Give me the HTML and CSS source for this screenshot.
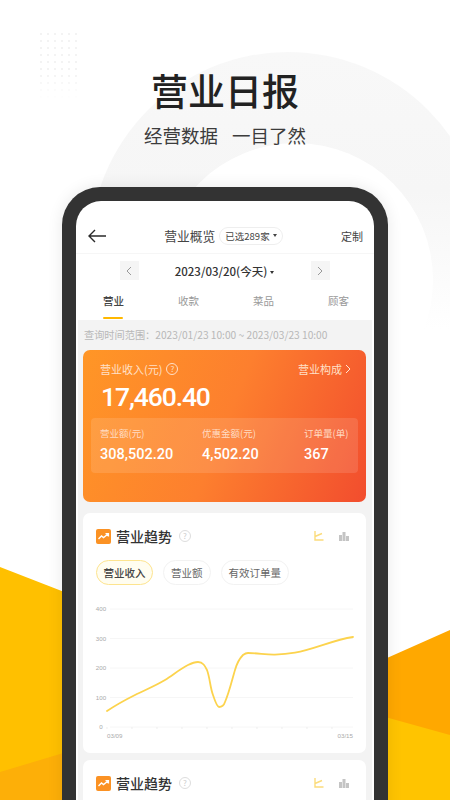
FILE: index.html
```html
<!DOCTYPE html>
<html lang="zh-CN">
<head>
<meta charset="utf-8">
<title>营业日报</title>
<link rel="stylesheet" href="styles.css">
</head>
<body>
<main class="page">
  <svg class="backdrop" width="450" height="800" viewBox="0 0 450 800" aria-hidden="true">
    <defs>
      <pattern id="dots" width="7" height="7" patternUnits="userSpaceOnUse" x="40" y="33">
        <circle cx="1" cy="1" r="0.8" fill="#e4e4e4"/>
      </pattern>
      <linearGradient id="ring" gradientUnits="userSpaceOnUse" x1="0" y1="52" x2="0" y2="330">
        <stop offset="0" stop-color="#f8f8f8"/>
        <stop offset="0.5" stop-color="#f6f6f6"/>
        <stop offset="1" stop-color="#fff"/>
      </linearGradient>
      <linearGradient id="fadeDots" x1="0" y1="0" x2="0" y2="1">
        <stop offset="0" stop-color="#fff"/>
        <stop offset="0.6" stop-color="#fff"/>
        <stop offset="1" stop-color="#000"/>
      </linearGradient>
      <mask id="dotMask"><rect x="40" y="33" width="38" height="66" fill="url(#fadeDots)"/></mask>
    </defs>
    <circle cx="288" cy="250" r="198" fill="url(#ring)"/>
    <circle cx="296" cy="280" r="137" fill="#fff"/>
    <rect x="40" y="33" width="38" height="66" fill="url(#dots)" mask="url(#dotMask)"/>
    <polygon points="0,567 90,602 90,800 0,800" fill="#ffc000"/>
    <polygon points="0,772 90,745 90,800 0,800" fill="#fdaf08"/>
    <polygon points="360,800 360,670 450,630 450,800" fill="#ffa800"/>
    <polygon points="360,710 450,735 450,800 360,800" fill="#ffc400"/>
  </svg>

  <header class="hero">
    <h1 class="hero-title">营业日报</h1>
    <p class="hero-sub"><span>经营数据</span><span>一目了然</span></p>
  </header>

  <section class="phone">
    <div class="screen">
      <nav class="nav">
        <svg class="back" width="18" height="14" viewBox="0 0 18 14" aria-hidden="true">
          <path d="M18 7H1M7 1 1 7l6 6" fill="none" stroke="#2a2a2a" stroke-width="1.400"/>
        </svg>
        <div class="nav-center">
          <span class="nav-title">营业概览</span>
          <span class="store-pill">已选289家<i class="caret-mini"></i></span>
        </div>
        <span class="nav-action">定制</span>
      </nav>

      <div class="date-row">
        <span class="date-btn">
          <svg width="6" height="10" viewBox="0 0 6 10" aria-hidden="true"><path d="M5 1 1 5l4 4" fill="none" stroke="#999" stroke-width="1"/></svg>
        </span>
        <span class="date-text">2023/03/20(今天)<i class="caret-mini dark"></i></span>
        <span class="date-btn">
          <svg width="6" height="10" viewBox="0 0 6 10" aria-hidden="true"><path d="m1 1 4 4-4 4" fill="none" stroke="#999" stroke-width="1"/></svg>
        </span>
      </div>

      <div class="tabs">
        <span class="tab active">营业</span>
        <span class="tab">收款</span>
        <span class="tab">菜品</span>
        <span class="tab">顾客</span>
      </div>

      <div class="content">
        <p class="range">查询时间范围：2023/01/23 10:00 ~ 2023/03/23 10:00</p>

        <section class="revenue">
          <div class="revenue-top">
            <span class="revenue-label">营业收入(元)<i class="help light">?</i></span>
            <span class="revenue-link">营业构成
              <svg width="6" height="10" viewBox="0 0 6 10" aria-hidden="true"><path d="m1 1 4 4-4 4" fill="none" stroke="#ffe6d2" stroke-width="1"/></svg>
            </span>
          </div>
          <div class="revenue-value">17,460.40</div>
          <div class="stats">
            <div class="stat stat-a"><span class="stat-label">营业额(元)</span><strong class="stat-value">308,502.20</strong></div>
            <div class="stat stat-b"><span class="stat-label">优惠金额(元)</span><strong class="stat-value">4,502.20</strong></div>
            <div class="stat stat-c"><span class="stat-label">订单量(单)</span><strong class="stat-value">367</strong></div>
          </div>
        </section>

        <section class="card">
          <div class="card-head">
            <svg class="trend-icon" width="15" height="15" viewBox="0 0 15 15" aria-hidden="true">
              <rect width="15" height="15" rx="2" fill="#fb9224"/>
              <path d="M2.500 10 5.500 7l2 1.600L12 5M9.500 4.600H12.400V7.400" fill="none" stroke="#fff" stroke-width="1.400"/>
            </svg>
            <h2 class="card-title">营业趋势</h2>
            <i class="help">?</i>
            <div class="chart-icons">
              <svg width="10" height="10" viewBox="0 0 10 10" aria-hidden="true"><path d="M1 0v9h8.500M1 5.500 8 2.500" fill="none" stroke="#fbdc7c" stroke-width="1.400"/></svg>
              <svg width="10" height="10" viewBox="0 0 10 10" aria-hidden="true"><path d="M0 4h3v6H0zM3.500 1h3v9h-3zM7 5h3v5H7z" fill="#c4c4c4"/></svg>
            </div>
          </div>
          <div class="chips">
            <span class="chip chip-on">营业收入</span>
            <span class="chip">营业额</span>
            <span class="chip">有效订单量</span>
          </div>
          <svg class="chart" width="283" height="148" viewBox="0 0 283 148" role="img" aria-label="营业趋势折线图">
            <path class="grid" d="M27 14H270M27 43.500H270M27 73H270M27 102.500H270M27 132H270"/>
            <path class="ticks" d="M24 132v2M49 132v2M74 132v2M99 132v2M124 132v2M149 132v2M174 132v2M199 132v2M224 132v2M249 132v2"/>
            <g class="axis">
              <text x="18" y="16" text-anchor="middle">400</text>
              <text x="18" y="45.500" text-anchor="middle">300</text>
              <text x="18" y="75" text-anchor="middle">200</text>
              <text x="18" y="104.500" text-anchor="middle">100</text>
              <text x="18" y="134" text-anchor="middle">0</text>
              <text x="24" y="143">03/09</text>
              <text x="270" y="143" text-anchor="end">03/15</text>
            </g>
            <path class="line" d="M24 116C33 110 42 105 52 100C62 95 72 91 82 85C90 80 97 74 105 70C109 68 112 67 115 67C120 67 122 71 124 75C127 83 127 92 130 100C132 106 134 112 136 112C139 112 141 110 142 107C146 98 149 85 152 75C154 68 157 63 160 60C162 58.500 163 58 165 58C175 58 183 60 192 59.700C200 59.400 206 58.700 212 57.700C232 54 250 45 270 42"/>
          </svg>
        </section>

        <section class="card card-next">
          <div class="card-head">
            <svg class="trend-icon" width="15" height="15" viewBox="0 0 15 15" aria-hidden="true">
              <rect width="15" height="15" rx="2" fill="#fb9224"/>
              <path d="M2.500 10 5.500 7l2 1.600L12 5M9.500 4.600H12.400V7.400" fill="none" stroke="#fff" stroke-width="1.400"/>
            </svg>
            <h2 class="card-title">营业趋势</h2>
            <i class="help">?</i>
            <div class="chart-icons">
              <svg width="10" height="10" viewBox="0 0 10 10" aria-hidden="true"><path d="M1 0v9h8.500M1 5.500 8 2.500" fill="none" stroke="#fbdc7c" stroke-width="1.400"/></svg>
              <svg width="10" height="10" viewBox="0 0 10 10" aria-hidden="true"><path d="M0 4h3v6H0zM3.500 1h3v9h-3zM7 5h3v5H7z" fill="#c4c4c4"/></svg>
            </div>
          </div>
        </section>
      </div>
    </div>
  </section>
</main>
</body>
</html>
```
FILE: styles.css
```css
* { box-sizing: border-box; }
html, body { margin: 0; padding: 0; }
body {
  width: 450px;
  height: 800px;
  overflow: hidden;
  background: #fff;
  font-family: "Noto Sans CJK SC", "Noto Sans", sans-serif;
}
.page {
  position: relative;
  width: 450px;
  height: 800px;
  overflow: hidden;
  padding-top: 65px;
}
.backdrop { position: absolute; left: 0; top: 0; }

.hero { position: relative; }
.hero-title {
  margin: 0;
  height: 50px;
  text-align: center;
  font-size: 37px;
  line-height: 50px;
  font-weight: 500;
  color: #222;
}
.hero-sub {
  display: flex;
  justify-content: center;
  gap: 14px;
  margin: 0;
  height: 37px;
  padding-top: 8px;
  font-size: 18.500px;
  line-height: 24px;
  color: #3c3c3c;
}

.phone {
  position: relative;
  width: 326px;
  height: 640px;
  margin: 35px 0 0 62px;
  padding: 14px 14px 0;
  background: #333;
  border-radius: 38px 38px 0 0;
  box-shadow: 0 0 16px rgba(0, 0, 0, .09);
}
.screen {
  height: 100%;
  border-radius: 25px 25px 0 0;
  background: #fff;
  overflow: hidden;
}

.nav {
  position: relative;
  display: flex;
  align-items: center;
  justify-content: center;
  height: 53px;
  padding-top: 17px;
  border-bottom: 1px solid #f6f6f6;
}
.back { position: absolute; left: 12px; top: 28px; }
.nav-center { display: flex; align-items: center; gap: 4px; margin-left: -3px; }
.nav-title { font-size: 12.750px; line-height: 18px; color: #444; }
.store-pill {
  display: flex;
  align-items: center;
  height: 18px;
  padding: 0 5px;
  border: 1px solid #eee;
  border-radius: 9px;
  font-size: 9.500px;
  color: #444;
}
.nav-action {
  position: absolute;
  right: 11px;
  top: 26px;
  font-size: 11px;
  line-height: 18px;
  color: #444;
}
.caret-mini {
  display: inline-block;
  width: 0;
  height: 0;
  margin-left: 3px;
  border-left: 2px solid transparent;
  border-right: 2px solid transparent;
  border-top: 3px solid #444;
}
.caret-mini.dark { border-top-color: #333; vertical-align: 2px; }

.date-row {
  display: flex;
  align-items: center;
  justify-content: center;
  height: 30px;
  padding: 3px 1px 0 0;
}
.date-btn {
  display: flex;
  align-items: center;
  justify-content: center;
  width: 19px;
  height: 19px;
  background: #f5f5f5;
}
.date-text {
  width: 172px;
  text-align: center;
  font-size: 11.500px;
  line-height: 18px;
  font-weight: 500;
  color: #333;
}

.tabs {
  display: grid;
  grid-template-columns: repeat(4, 75px);
  height: 36px;
}
.tab {
  position: relative;
  padding-top: 8px;
  text-align: center;
  font-size: 10.500px;
  line-height: 18px;
  color: #999;
}
.tab.active { color: #444; font-weight: 500; }
.tab.active::after {
  content: "";
  position: absolute;
  left: 27px;
  bottom: 1px;
  width: 20px;
  height: 2.500px;
  border-radius: 2px;
  background: #ffb800;
}

.content {
  height: 600px;
  margin: 0 2px;
  padding: 0 6px 0 5px;
  background: #f3f3f3;
}
.range {
  margin: 0;
  height: 30px;
  padding: 6px 0 0 1px;
  font-size: 10.200px;
  line-height: 18px;
  color: #b8b8b8;
  white-space: nowrap;
}

.revenue {
  height: 152px;
  padding: 10px 8px 0;
  border-radius: 7px;
  background: linear-gradient(112deg, #ff9626 0%, #fd7f2e 50%, #f24d2e 100%);
  color: #fff;
}
.revenue-top {
  display: flex;
  align-items: center;
  justify-content: space-between;
  height: 18px;
  padding: 0 7px 0 9px;
  font-size: 11px;
  color: #ffe0c8;
}
.revenue-label, .revenue-link { display: flex; align-items: center; gap: 3px; }
.revenue-value {
  margin: 2px 0 0 10px;
  height: 33px;
  font-family: "Roboto", sans-serif;
  font-size: 26.500px;
  line-height: 33px;
  font-weight: 500;
  letter-spacing: -1.100px;
}
.stats {
  display: flex;
  height: 55px;
  margin-top: 5px;
  padding: 8px 0 0 9px;
  border-radius: 4px;
  background: rgba(255, 255, 255, .12);
}
.stat { display: flex; flex-direction: column; }
.stat-a, .stat-b { width: 102px; }
.stat-label { font-size: 9.500px; line-height: 15px; color: #ffdcc4; white-space: nowrap; }
.stat-value {
  margin-top: 5px;
  font-family: "Roboto", sans-serif;
  font-size: 14.500px;
  line-height: 18px;
  font-weight: 500;
  white-space: nowrap;
}

.help {
  display: inline-flex;
  align-items: center;
  justify-content: center;
  width: 12px;
  height: 12px;
  border: 1px solid #ddd;
  border-radius: 50%;
  font-style: normal;
  font-size: 8px;
  line-height: 1;
  color: #ccc;
}
.help.light { border-color: #ffe0c8; color: #ffe0c8; margin-left: 1px; }

.card {
  height: 240px;
  margin-top: 11px;
  padding-top: 14px;
  border-radius: 7px;
  background: #fff;
}
.card-next { margin-top: 7px; }
.card-head {
  display: flex;
  align-items: center;
  height: 18px;
  padding: 0 17px 0 13px;
}
.trend-icon { flex: none; }
.card-title {
  margin: 0 7px 0 5px;
  font-size: 14px;
  line-height: 18px;
  font-weight: 500;
  color: #333;
}
.chart-icons { display: flex; gap: 15px; margin-left: auto; }

.chips { display: flex; gap: 10px; margin-top: 15px; padding-left: 13px; }
.chip {
  display: flex;
  align-items: center;
  height: 25px;
  padding: 0 7px;
  border: 1px solid #f2f2f2;
  border-radius: 13px;
  font-size: 10.500px;
  color: #666;
}
.chip-on {
  background: #fffdf0;
  border: 1.500px solid #fde48f;
  padding: 0 6.500px;
  color: #444;
  font-weight: 500;
}

.chart { display: block; margin-top: 10px; }
.grid { fill: none; stroke: #f6f6f6; stroke-width: 1; }
.ticks { fill: none; stroke: #e6e6e6; stroke-width: .7; }
.axis text { font-family: "Liberation Sans", sans-serif; font-size: 6.200px; fill: #aaa; }
.line { fill: none; stroke: #fcd34d; stroke-width: 1.800; stroke-linecap: round; }
```
